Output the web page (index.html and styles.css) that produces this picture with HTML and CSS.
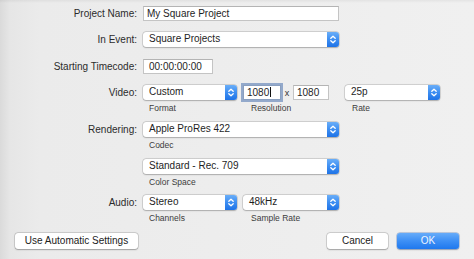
FILE: index.html
```html
<!DOCTYPE html>
<html>
<head>
<meta charset="utf-8">
<link rel="stylesheet" href="styles.css">
</head>
<body>
<div class="dialog">
  <div class="row">
    <div class="label">Project Name:</div>
    <div class="ctl"><div class="field w-full">My Square Project</div></div>
  </div>
  <div class="row gap12">
    <div class="label">In Event:</div>
    <div class="ctl"><div class="select w-full"><span>Square Projects</span><span class="stepper"><svg viewBox="0 0 12 15" width="12" height="15"><path d="M3.8 6.3 L6 4.2 L8.2 6.3 M3.8 8.7 L6 10.8 L8.2 8.7" fill="none" stroke="#fff" stroke-width="1.3" stroke-linecap="round" stroke-linejoin="round"/></svg></span></div></div>
  </div>
  <div class="row">
    <div class="label">Starting Timecode:</div>
    <div class="ctl"><div class="field w-tc">00:00:00:00</div></div>
  </div>
  <div class="row sub">
    <div class="label">Video:</div>
    <div class="ctl">
      <div class="group">
        <div class="select w-s"><span>Custom</span><span class="stepper"><svg viewBox="0 0 12 15" width="12" height="15"><path d="M3.8 6.3 L6 4.2 L8.2 6.3 M3.8 8.7 L6 10.8 L8.2 8.7" fill="none" stroke="#fff" stroke-width="1.3" stroke-linecap="round" stroke-linejoin="round"/></svg></span></div>
        <div class="sublabel p6">Format</div>
      </div>
      <div class="group ml6">
        <div class="res">
          <div class="field w-r1 focus">1080<span class="caret"></span></div>
          <span class="times">x</span>
          <div class="field w-r2">1080</div>
        </div>
        <div class="sublabel p8">Resolution</div>
      </div>
      <div class="group ml16">
        <div class="select w-rate"><span>25p</span><span class="stepper"><svg viewBox="0 0 12 15" width="12" height="15"><path d="M3.8 6.3 L6 4.2 L8.2 6.3 M3.8 8.7 L6 10.8 L8.2 8.7" fill="none" stroke="#fff" stroke-width="1.3" stroke-linecap="round" stroke-linejoin="round"/></svg></span></div>
        <div class="sublabel p7">Rate</div>
      </div>
    </div>
  </div>
  <div class="row sub">
    <div class="label">Rendering:</div>
    <div class="ctl">
      <div class="group">
        <div class="select w-full"><span>Apple ProRes 422</span><span class="stepper"><svg viewBox="0 0 12 15" width="12" height="15"><path d="M3.8 6.3 L6 4.2 L8.2 6.3 M3.8 8.7 L6 10.8 L8.2 8.7" fill="none" stroke="#fff" stroke-width="1.3" stroke-linecap="round" stroke-linejoin="round"/></svg></span></div>
        <div class="sublabel p6">Codec</div>
      </div>
    </div>
  </div>
  <div class="row sub tight">
    <div class="label"></div>
    <div class="ctl">
      <div class="group">
        <div class="select w-full"><span>Standard - Rec. 709</span><span class="stepper"><svg viewBox="0 0 12 15" width="12" height="15"><path d="M3.8 6.3 L6 4.2 L8.2 6.3 M3.8 8.7 L6 10.8 L8.2 8.7" fill="none" stroke="#fff" stroke-width="1.3" stroke-linecap="round" stroke-linejoin="round"/></svg></span></div>
        <div class="sublabel p6">Color Space</div>
      </div>
    </div>
  </div>
  <div class="row sub">
    <div class="label">Audio:</div>
    <div class="ctl">
      <div class="group">
        <div class="select w-s"><span>Stereo</span><span class="stepper"><svg viewBox="0 0 12 15" width="12" height="15"><path d="M3.8 6.3 L6 4.2 L8.2 6.3 M3.8 8.7 L6 10.8 L8.2 8.7" fill="none" stroke="#fff" stroke-width="1.3" stroke-linecap="round" stroke-linejoin="round"/></svg></span></div>
        <div class="sublabel p6">Channels</div>
      </div>
      <div class="group ml6">
        <div class="select w-sr"><span>48kHz</span><span class="stepper"><svg viewBox="0 0 12 15" width="12" height="15"><path d="M3.8 6.3 L6 4.2 L8.2 6.3 M3.8 8.7 L6 10.8 L8.2 8.7" fill="none" stroke="#fff" stroke-width="1.3" stroke-linecap="round" stroke-linejoin="round"/></svg></span></div>
        <div class="sublabel p8">Sample Rate</div>
      </div>
    </div>
  </div>
  <div class="buttons">
    <div class="btn w-auto">Use Automatic Settings</div>
    <div class="right">
      <div class="btn w-cancel">Cancel</div>
      <div class="btn primary w-ok">OK</div>
    </div>
  </div>
</div>
</body>
</html>
```

FILE: styles.css
```css
* { box-sizing: border-box; }
html, body { margin: 0; padding: 0; }
body {
  width: 474px;
  height: 259px;
  overflow: hidden;
  font-family: "Liberation Sans", Arial, sans-serif;
  font-size: 10px;
  color: #262626;
  background:
    linear-gradient(to bottom, rgba(0,0,0,0.05) 0, rgba(0,0,0,0) 3px),
    linear-gradient(to right, #dadada 0, #e6e6e6 10px, #ebebeb 40px, #eeeeee 300px, #f0f0f0 100%);
}
.dialog {
  display: flex;
  flex-direction: column;
  padding-top: 6px;
}
.row {
  display: grid;
  grid-template-columns: 137px auto;
  column-gap: 6px;
  margin-bottom: 11px;
}
.row.gap12 { margin-bottom: 12px; }
.row.sub { margin-bottom: 9px; }
.row.sub.tight { margin-bottom: 8px; }
.label {
  text-align: right;
  line-height: 15px;
  height: 15px;
  white-space: nowrap;
  color: #2b2b2b;
}
.ctl {
  display: flex;
  align-items: flex-start;
}
.group {
  display: flex;
  flex-direction: column;
}
.ml6 { margin-left: 6px; }
.ml16 { margin-left: 16px; }
.sublabel {
  margin-top: 3px;
  font-size: 8.5px;
  line-height: 10px;
  height: 10px;
  color: #3c3c3c;
  white-space: nowrap;
}
.p6 { padding-left: 6px; }
.p7 { padding-left: 7px; }
.p8 { padding-left: 8px; }

.field {
  height: 15px;
  line-height: 13px;
  background: #fff;
  border: 1px solid #c4c4c4;
  border-top-color: #b4b4b4;
  padding-left: 3px;
  white-space: nowrap;
  color: #1e1e1e;
}
.w-full { width: 196px; }
.w-tc { width: 70px; padding-left: 5px; }
.w-s { width: 94px; }
.w-sr { width: 96px; }
.w-rate { width: 95px; }
.w-r1 { width: 38px; }
.w-r2 { width: 36px; }
.res {
  display: flex;
  align-items: center;
  height: 15px;
}
.times {
  width: 12px;
  text-align: center;
  font-size: 9px;
  color: #333;
}
.focus {
  border-color: #8a9fbf;
  box-shadow: 0 0 0 2px #93a9cb;
}
.caret {
  display: inline-block;
  width: 1px;
  height: 10px;
  background: #111;
  margin-left: 1px;
  vertical-align: -1px;
}
.select {
  position: relative;
  display: flex;
  height: 15px;
  line-height: 14px;
  background: #fff;
  border-radius: 3px;
  box-shadow: 0 0 0 0.5px rgba(0,0,0,0.2), 0 0.5px 1.5px rgba(0,0,0,0.2);
  color: #1e1e1e;
  white-space: nowrap;
}
.select span:first-child {
  flex: 1;
  padding-left: 6px;
}
.stepper {
  width: 12px;
  height: 15px;
  border-radius: 0 3px 3px 0;
  background: linear-gradient(to bottom, #6aaef8 0, #3d8ef2 50%, #1f73e6 100%);
  display: block;
}
.stepper svg { display: block; }

.buttons {
  display: flex;
  justify-content: space-between;
  padding: 0 15px;
  margin-top: 1px;
}
.right {
  display: flex;
  gap: 9px;
}
.btn {
  height: 16px;
  line-height: 15px;
  text-align: center;
  background: #fff;
  border-radius: 3px;
  box-shadow: 0 0 0 0.5px rgba(0,0,0,0.2), 0 0.5px 1.5px rgba(0,0,0,0.25);
  color: #222;
  white-space: nowrap;
}
.w-auto { width: 123px; }
.w-cancel { width: 61px; }
.w-ok { width: 62px; }
.btn.primary {
  background: linear-gradient(to bottom, #67acf9 0, #3d8ff5 50%, #1f78ee 100%);
  color: #eef5ff;
  box-shadow: 0 0 0 0.5px rgba(20,80,180,0.4), 0 0.5px 1.5px rgba(0,0,0,0.25);
}
```
